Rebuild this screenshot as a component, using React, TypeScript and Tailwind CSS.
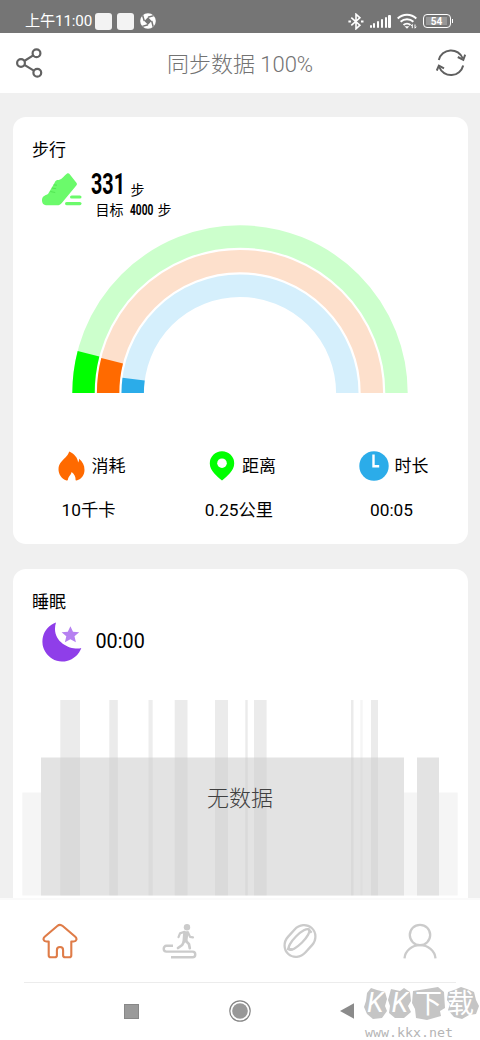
import type { ReactNode } from "react";

const rings = [
  { radius: 156.5, track: "#ccffcc", color: "#00ff00", angle: 14.5 },
  { radius: 131.9, track: "#fde0cc", color: "#ff6a00", angle: 14.2 },
  { radius: 107.3, track: "#d5effc", color: "#2bace9", angle: 7.4 },
];

// [x, width, opacity] inside the 436px wide sleep chart
const stripes = [
  [38.3, 19.7, 0.08],
  [87.3, 8.5, 0.08],
  [126.5, 4.2, 0.07],
  [152.7, 12.8, 0.08],
  [193, 13, 0.08],
  [223.3, 2.4, 0.08],
  [232, 12.6, 0.08],
  [329, 2.5, 0.08],
  [338.3, 2.4, 0.04],
  [349, 7, 0.08],
];

const signal = [3, 5, 7, 9, 11, 13];

function arc(r: number, angle: number) {
  const a = (angle * Math.PI) / 180;
  return `M${168 - r} 168A${r} ${r} 0 0 1 ${168 - r * Math.cos(a)} ${168 - r * Math.sin(a)}`;
}

function StatusBar() {
  return (
    <div className="flex h-[33px] items-center bg-[#757575] pt-[9px] pr-[27px] pl-[25px] text-white">
      <span className="w-[70px] text-[15.2px] leading-6 tracking-[-0.15px] whitespace-nowrap">上午11:00</span>
      <span className="size-[17px] rounded-[3px] bg-[#f3f3f3]" />
      <span className="ml-[5px] size-[17px] rounded-[3px] bg-[#f3f3f3]" />
      <svg className="ml-[6px] size-4" viewBox="0 0 16 16">
        <circle cx="8" cy="8" r="7.8" fill="#fff" />
        <path d="M8 4.3 11.7 8 8 11.7 4.3 8Z" fill="#757575" />
        <path d="M8 4.3 13.7 2.6M11.7 8l1.5 5.7M8 11.7l-5.7 1.7M4.3 8 2.6 2.3" stroke="#757575" strokeWidth="1.5" />
      </svg>
      <svg className="ml-auto h-[17px] w-4" viewBox="0 0 16 17" fill="none" stroke="#fff" strokeWidth="1.6">
        <path d="m3.3 4.7 8.6 7.5L8 15.8V1.2l3.9 3.6-8.6 7.5" />
        <path d="M.4 8.5h2.5M13 8.5h2.5" strokeWidth="2.2" />
      </svg>
      <div className="ml-[6px] flex h-[13px] items-end gap-[1.7px]">
        {signal.map((h) => (
          <span key={h} className="w-[2.1px] rounded-[1px] bg-white" style={{ height: h }} />
        ))}
      </div>
      <svg className="ml-[6px] h-[16px] w-[20px]" viewBox="0 0 20 16" fill="none" stroke="#fff" strokeWidth="1.9">
        <path d="M.7 5.5a13.3 13.3 0 0 1 18.6 0M3.6 8.8a9.3 9.3 0 0 1 12.8 0M6.5 12a5.2 5.2 0 0 1 7 0" />
        <path d="m7.5 13.2 2.5 2.5 2.3-2.5Z" fill="#fff" stroke="none" />
        <path d="M15.3 15.2v-3.7l-1.3 1.5M18 11.5v3.7l1.3-1.5" strokeWidth="1" />
      </svg>
      <div className="ml-[6px] flex items-center">
        <div className="flex h-[13.5px] w-[28px] items-center justify-center rounded-[4px] border-[1.5px] border-white">
          <div className="flex h-2 w-[21px] items-center justify-center bg-white/25 text-[10px] font-bold">54</div>
        </div>
        <span className="ml-px h-1 w-[1.5px] bg-white" />
      </div>
    </div>
  );
}

function Header() {
  return (
    <header className="flex h-[60px] items-center justify-between bg-white px-4">
      <svg className="size-[30px] -translate-x-px" viewBox="0 0 30 30" fill="none" stroke="#626262" strokeWidth="2.2">
        <circle cx="6" cy="15" r="3.9" />
        <circle cx="21.5" cy="5.3" r="3.9" />
        <circle cx="22.3" cy="24.7" r="3.9" />
        <path d="m9.3 13 8.9-5.6M9.4 16.9l9.4 5.7" />
      </svg>
      <h1 className="pt-[3px] text-[22px] leading-8 font-light whitespace-nowrap text-[#737373]">同步数据 100%</h1>
      <svg className="size-[30px] translate-x-[2px]" viewBox="0 0 30 30" fill="none" stroke="#606060" strokeWidth="2">
        <path d="M2.8 12A12.6 12.6 0 0 1 26.8 10.5M27.2 17.5A12.6 12.6 0 0 1 3.2 19" />
        <path d="m21.8 9 5.5 2.8 1.9-5.2M8 20.3l-5.1-2.7L.8 22.5" />
      </svg>
    </header>
  );
}

function Gauge() {
  return (
    <svg className="mx-auto mt-[6px] h-[168px] w-[336px]" viewBox="0 0 336 168" fill="none" strokeWidth="22.4">
      {rings.map((ring) => (
        <g key={ring.color}>
          <path d={arc(ring.radius, 180)} stroke={ring.track} />
          <path d={arc(ring.radius, ring.angle)} stroke={ring.color} />
        </g>
      ))}
    </svg>
  );
}

function Stat({ icon, label, value }: { icon: ReactNode; label: string; value: ReactNode }) {
  return (
    <div className="flex w-[90px] flex-col items-center">
      <div className="flex h-[30px] items-center gap-[7px] text-[17px] whitespace-nowrap">
        {icon}
        <span className="pt-[2px]">{label}</span>
      </div>
      <div className="mt-[14px] text-[17.3px] leading-[30px] whitespace-nowrap">{value}</div>
    </div>
  );
}

function WalkCard() {
  return (
    <section className="h-[428px] rounded-[13px] bg-white pt-[19.5px]">
      <h2 className="pl-[19.5px] text-[17px] leading-[26px]">步行</h2>
      <div className="flex h-[56px] pl-[29px]">
        <svg className="mt-[10px] h-[34px] w-[40px]" viewBox="0 0 40 34" fill="#6bfa6b">
          <path d="M12.5 10c1.5-3.6 3.2-2.8 4.3-3 3.4-.8 5.4-4.1 8.3-6.4.8-.6 1.5-.6 2.2.1l7.1 9c.8 1 .7 1.8-.1 2.7L19.8 30c-1.4 1.8-2.5 2.3-4.8 2.3H5.5C1.5 32.3 0 30.3 0 27.3c0-3 1.8-4.5 6-6.2Z" />
          <path d="m8.2 18.5 5 1M9.7 15l4.5.7M11.4 11.8l3.6.4" stroke="#2fc52f" strokeOpacity=".45" strokeWidth=".9" />
          <rect x="28" y="22.4" width="11.5" height="3.2" rx="1.6" />
          <rect x="23" y="29" width="16.5" height="3.2" rx="1.6" />
        </svg>
        <div className="pl-[9px]">
          <div className="flex h-[37px] items-end">
            <span className="w-[40px] origin-left translate-y-[3px] scale-x-[0.67] text-[29.5px] leading-[37px] font-bold">
              331
            </span>
            <span className="text-[14px] leading-[20px]">步</span>
          </div>
          <div className="flex pl-[5px] text-[14px] leading-[20px]">
            目标
            <span className="ml-[6px] w-[28px] origin-left translate-y-px scale-x-[0.7] text-[14.5px] font-bold">
              4000
            </span>
            步
          </div>
        </div>
      </div>
      <Gauge />
      <div className="mt-[58px] flex justify-between pr-[29px] pl-[34px]">
        <Stat
          label="消耗"
          value={<span className="-ml-[6px]">10千卡</span>}
          icon={
            <svg className="h-[30px] w-[27px]" viewBox="0 0 27 30" fill="#ff6a00">
              <path d="M8.5 29.5C3.4 27.8.5 23.3.5 18.3c0-6.5 5-9.2 8.2-13.2C10 3.4 10.7 1.8 11.3.4c5 2.5 8.5 6.2 8.8 11.1.8-1.1 1-2.4.9-3.7 3.6 2.8 5.5 6.5 5.5 11.2 0 4.8-2.7 9-7.8 10.5l-1.1-.3c.1-3.4-1-5.7-4-8.2-.5 3-3.5 4.5-3.8 8.3Z" />
            </svg>
          }
        />
        <Stat
          label="距离"
          value={<span className="-ml-[7px]">0.25公里</span>}
          icon={
            <svg className="h-[30px] w-[26px]" viewBox="0 0 26 30">
              <path d="M13 .3A12.1 12.1 0 0 1 25.2 12.5C25.2 20 17.7 25.4 13 29.6 8.3 25.4.8 20 .8 12.5A12.1 12.1 0 0 1 13 .3Z" fill="#0f0" />
              <circle cx="13" cy="12.2" r="4.8" fill="#fff" />
            </svg>
          }
        />
        <Stat
          label="时长"
          value={<span className="-ml-[4px]">00:05</span>}
          icon={
            <svg className="-mr-px size-[30px]" viewBox="0 0 30 30">
              <circle cx="15" cy="15" r="14.7" fill="#2bace9" />
              <path d="M14.5 3.5v11.8h5.7" fill="none" stroke="#fff" strokeWidth="2.4" />
            </svg>
          }
        />
      </div>
    </section>
  );
}

function SleepCard() {
  return (
    <section className="h-[329px] rounded-t-[13px] bg-white pt-[20px]">
      <h2 className="pl-[19.5px] text-[17px] leading-[26px]">睡眠</h2>
      <div className="flex h-[50px] items-center pt-[3px] pl-[29px]">
        <svg className="size-10" viewBox="0 0 40 40">
          <path d="M14 .5A20 20 0 1 0 39.3 26C30 29 8 20 14 .5Z" fill="#8f3ee9" />
          <path d="m28.4 4.2 2.6 5.5 6.2.5-4.7 4.1 1.4 6-5.5-3.1-5.5 3.1 1.4-6-4.7-4.1 6.2-.5Z" fill="#b681f1" />
        </svg>
        <span className="pl-[14px] text-[19.8px] leading-6">00:00</span>
      </div>
      <div className="relative mt-[35px] ml-[9.5px] h-[196px] w-[436px]">
        <svg className="size-full" viewBox="0 0 436 196">
          <path d="M.3 92.5h435.4V195.5H.3Z" fill="#f5f5f5" />
          <path d="M19 57.5h363v138H19ZM395 57.5h22v138h-22Z" fill="#e3e3e3" />
          {stripes.map(([x, width, opacity]) => (
            <g key={x}>
              <rect x={x} width={width} height="57.5" fillOpacity={opacity} />
              <rect x={x} y="57.5" width={width} height="138" fillOpacity={opacity / 2} />
            </g>
          ))}
        </svg>
        <div className="absolute inset-x-0 top-[83px] text-center text-[22px] leading-8 font-light text-[#404040]">
          无数据
        </div>
      </div>
    </section>
  );
}

function TabBar() {
  return (
    <nav className="flex h-[84px] items-center justify-between border-t-2 border-[#fafafa] bg-white px-[42px]">
      <svg className="size-9" viewBox="0 0 36 36" fill="none" stroke="#df7c48" strokeWidth="2.1" strokeLinejoin="round">
        <path d="M6.7 18.5H4.3C1.3 18.5.7 15.5 2.7 13.7L15.3 3C17 1.5 19 1.5 20.7 3l12.6 10.7c2 1.8 1.4 4.8-1.6 4.8h-2.4v13.7c0 1.4-.7 2.1-2 2.1h-4.1c-1.4 0-2.1-.7-2.1-2.1v-5c0-4.2-6.2-4.2-6.2 0v5c0 1.4-.7 2.1-2.1 2.1H8.7c-1.3 0-2-.7-2-2.1Z" />
      </svg>
      <svg className="size-9" viewBox="0 0 36 36" fill="none" stroke="#cbcbcb" strokeWidth="2.2" strokeLinecap="round" strokeLinejoin="round">
        <circle cx="25" cy="4.3" r="3.2" fill="#cbcbcb" stroke="none" />
        <path d="m16.5 14.2 1.5-3.8 4.5-1.6M26 9.5l2 4.3 3 .5" />
        <path d="M22 9h3.8l-1.2 9.5h-3.4Z" fill="#cbcbcb" strokeWidth="1.6" />
        <path d="m22 18.5-1.8 3.5-4.2 3M24 18l3 3.2.8 4" strokeWidth="2.7" />
        <path d="M11 22.8H4.5c-3.7 0-3.7 5.8 0 5.8H30.5c3.7 0 3.7 5.6 0 5.6H9" strokeLinecap="butt" strokeWidth="2.4" />
      </svg>
      <svg className="size-9" viewBox="0 0 36 36" fill="none" stroke="#cbcbcb" strokeWidth="2.3">
        <rect x=".5" y="6.3" width="35" height="23.4" rx="12.5" transform="rotate(-48 18 18)" />
        <ellipse cx="17" cy="16.5" rx="14" ry="4.3" transform="rotate(-45 17 16.5)" />
        <path d="m26 5.5 3.6 4.3M5 25.8l5.5.7" />
      </svg>
      <svg className="size-9" viewBox="0 0 36 36" fill="none" stroke="#cbcbcb" strokeWidth="2.3">
        <circle cx="18" cy="12" r="10.2" />
        <path d="M2.5 35.3C3.2 27.8 10 22.2 18 22.2s14.8 5.6 15.5 13.1" />
      </svg>
    </nav>
  );
}

function Watermark() {
  return (
    <svg className="absolute top-[5px] left-[362px] h-[53px] w-[118px]" viewBox="0 0 118 53">
      <path
        d="M5 6 9 1l6 2 8 2 2 7-2 7 2 5-5 7-9 1-6-5-3-7 2-6ZM29 2l9 2 4-3 6 4 1 9-3 5 3 6-7 6-9 0-6-5 1-7-2-6ZM51 4l13-2 12-2 6 5 1 16-5 3 1 5-14 4-11-2-1-9-3-6ZM86 5l6-2 7-3 6 2 7 3 2 8 3 6-3 8-7 1-7 4-8-2-6-7 2-6-3-4Z"
        className="fill-[#c5c5c5]"
      />
      <g className="fill-white">
        <text x="5" y="25" fontSize="27" fontStyle="italic" textLength="41">KK</text>
        <text x="53" y="26" fontSize="27" textLength="59">下载</text>
      </g>
      <text
        x="3"
        y="50"
        fontSize="11.5"
        textLength="88"
        lengthAdjust="spacingAndGlyphs"
        className="fill-[#b5b5b5] font-['DejaVu_Sans_Mono',monospace]"
      >
        www.kkx.net
      </text>
    </svg>
  );
}

function SystemNav() {
  return (
    <div className="relative h-[58px] bg-white">
      <div className="mx-6 h-px bg-[#ececec]" />
      <div className="flex h-[57px] items-center pb-px pl-[124px]">
        <span className="size-[15px] border border-[#888] bg-[#9a9a9a]" />
        <svg className="ml-[90px] size-[22px]" viewBox="0 0 22 22">
          <circle cx="11" cy="11" r="10.2" fill="none" stroke="#858585" strokeWidth="1.2" />
          <circle cx="11" cy="11" r="7.8" fill="#989898" />
        </svg>
        <svg className="ml-[89px] h-4 w-[15px]" viewBox="0 0 15 16">
          <path d="M0 8 14 .3v15.4Z" fill="#8b8b8b" />
        </svg>
      </div>
      <Watermark />
    </div>
  );
}

export default function App() {
  return (
    <div className="flex h-[1040px] w-[480px] flex-col overflow-hidden bg-[#f0f0f0] font-['Roboto','Noto_Sans_CJK_SC',sans-serif] text-black">
      <StatusBar />
      <Header />
      <main className="flex h-[805px] flex-col gap-[25px] overflow-hidden px-[12.5px] pt-6">
        <WalkCard />
        <SleepCard />
      </main>
      <TabBar />
      <SystemNav />
    </div>
  );
}
